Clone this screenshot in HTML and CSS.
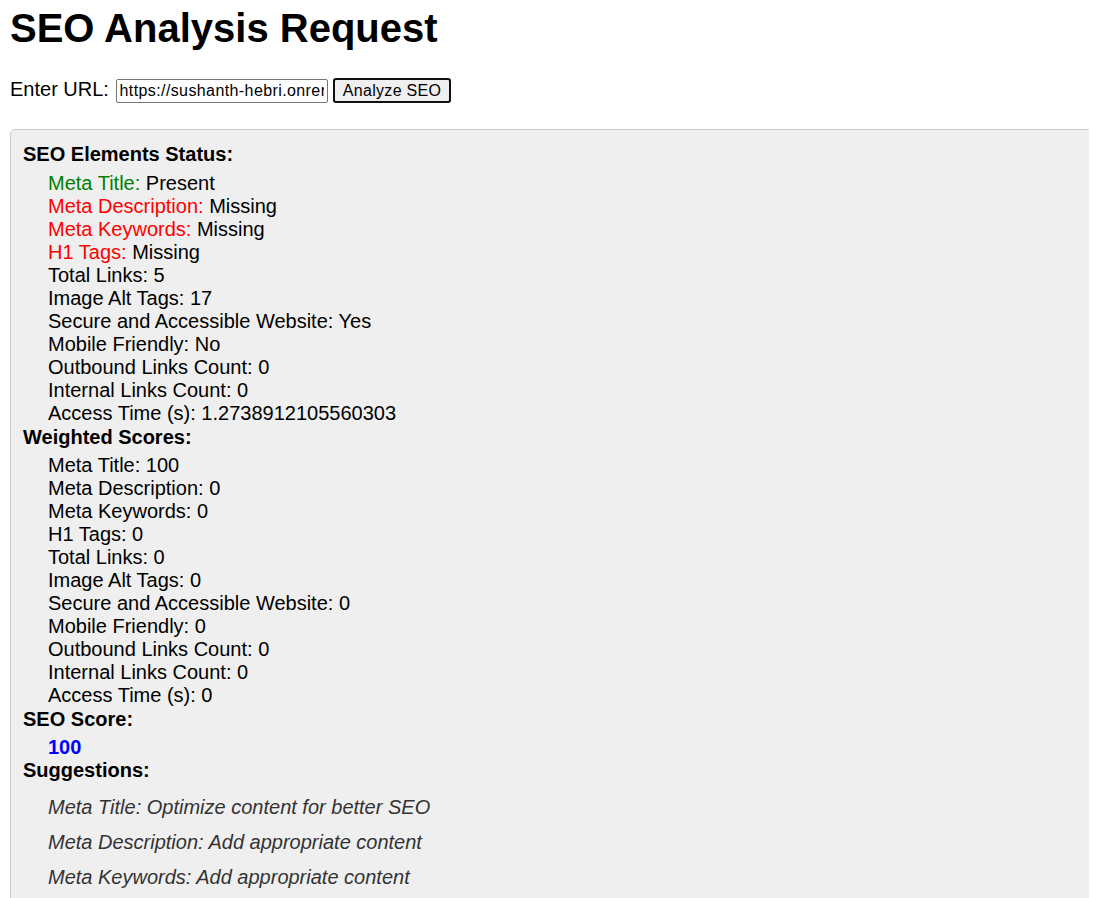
FILE: index.html
```html
<!DOCTYPE html>
<html lang="en">
<head>
<meta charset="utf-8">
<title>SEO Analysis Request</title>
<link rel="stylesheet" href="styles.css">
</head>
<body>
<h1 class="title">SEO Analysis Request</h1>
<form class="url-form">
  <label class="url-label" for="url">Enter URL:</label>
  <input class="url-input" id="url" type="text" value="https://sushanth-hebri.onrender.com/">
  <button class="analyze-btn" type="button">Analyze SEO</button>
</form>
<div class="result">
  <div class="section-title first-title">SEO Elements Status:</div>
  <ul class="items">
    <li><span class="ok">Meta Title:</span> Present</li>
    <li><span class="bad">Meta Description:</span> Missing</li>
    <li><span class="bad">Meta Keywords:</span> Missing</li>
    <li><span class="bad">H1 Tags:</span> Missing</li>
    <li>Total Links: 5</li>
    <li>Image Alt Tags: 17</li>
    <li>Secure and Accessible Website: Yes</li>
    <li>Mobile Friendly: No</li>
    <li>Outbound Links Count: 0</li>
    <li>Internal Links Count: 0</li>
    <li>Access Time (s): 1.2738912105560303</li>
  </ul>
  <div class="section-title after-list">Weighted Scores:</div>
  <ul class="items">
    <li>Meta Title: 100</li>
    <li>Meta Description: 0</li>
    <li>Meta Keywords: 0</li>
    <li>H1 Tags: 0</li>
    <li>Total Links: 0</li>
    <li>Image Alt Tags: 0</li>
    <li>Secure and Accessible Website: 0</li>
    <li>Mobile Friendly: 0</li>
    <li>Outbound Links Count: 0</li>
    <li>Internal Links Count: 0</li>
    <li>Access Time (s): 0</li>
  </ul>
  <div class="section-title score-title">SEO Score:</div>
  <div class="score">100</div>
  <div class="section-title">Suggestions:</div>
  <div class="suggestions">
    <p>Meta Title: Optimize content for better SEO</p>
    <p>Meta Description: Add appropriate content</p>
    <p>Meta Keywords: Add appropriate content</p>
    <p>H1 Tags: Add appropriate content</p>
  </div>
</div>
</body>
</html>
```
FILE: styles.css
```css
body {
  margin: 6px 10px 0;
  font-family: "Liberation Sans", Arial, sans-serif;
  font-size: 20px;
  color: #000;
  background: #fff;
  overflow-x: hidden;
}
.title {
  margin: 0 0 0.67em;
  font-size: 40px;
  font-weight: bold;
}
.url-form {
  margin: 0;
}
.url-label {
  margin-right: 1px;
}
.url-input {
  box-sizing: border-box;
  width: 212px;
  height: 24px;
  font-family: "Liberation Sans", Arial, sans-serif;
  font-size: 16px;
  letter-spacing: 0.4px;
  padding: 1px 3px;
  margin: 0;
  border: 1px solid #767676;
  border-radius: 2px;
  color: #000;
  background: #fff;
}
.analyze-btn {
  box-sizing: border-box;
  width: 118px;
  height: 25px;
  font-family: "Liberation Sans", Arial, sans-serif;
  font-size: 16px;
  letter-spacing: 0.3px;
  color: #000;
  background: #efefef;
  border: 2px solid #101010;
  border-radius: 3px;
  padding: 0 6px;
  margin: 0;
}
.result {
  margin-top: 26px;
  width: calc(100% + 40px);
  padding: 13px 12px;
  background: #efefef;
  border: 1px solid #cccccc;
  border-radius: 5px;
}
.section-title {
  font-weight: bold;
  margin-bottom: 5px;
}
.first-title {
  margin-bottom: 6px;
}
.items {
  list-style: none;
  margin: 0;
  padding: 0 0 0 25px;
}
.after-list {
  margin-top: 1px;
}
.score-title {
  margin-top: 1px;
  margin-bottom: 5px;
}
.ok {
  color: #008000;
}
.bad {
  color: #ff0000;
}
.score {
  padding-left: 25px;
  color: #0000ff;
  font-weight: bold;
}
.suggestions {
  padding-left: 25px;
}
.suggestions p {
  margin: 12px 0;
  font-style: italic;
  color: #333333;
}
.suggestions p:first-child {
  margin-top: 14px;
}
```
